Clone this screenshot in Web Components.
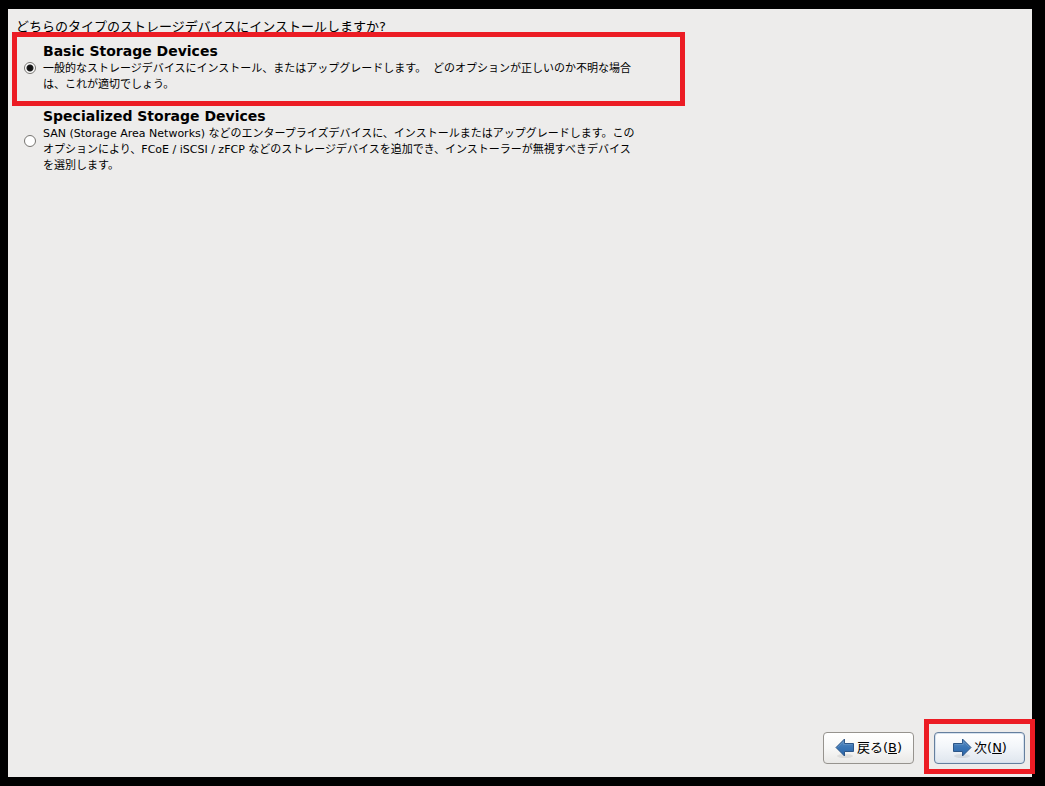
<!DOCTYPE html>
<html lang="ja">
<head>
<meta charset="utf-8">
<meta name="viewport" content="width=device-width, initial-scale=1">
<title>ストレージデバイス</title>
<style>
  body { margin: 0; background: #000; color: #000; font: 13px/16px "DejaVu Sans", "Noto Sans CJK JP", sans-serif; }
</style>
</head>
<body>
<installer-screen>
  <span slot="question">どちらのタイプのストレージデバイスにインストールしますか?</span>
  <storage-option value="basic" checked highlighted>
    <span slot="name">Basic Storage Devices</span>
    一般的なストレージデバイスにインストール、またはアップグレードします。&nbsp; どのオプションが正しいのか不明な場合は、これが適切でしょう。
  </storage-option>
  <storage-option value="specialized">
    <span slot="name">Specialized Storage Devices</span>
    SAN (Storage Area Networks) などのエンタープライズデバイスに、インストールまたはアップグレードします。このオプションにより、FCoE / iSCSI / zFCP などのストレージデバイスを追加でき、インストーラーが無視すべきデバイスを選別します。
  </storage-option>
  <nav-button slot="actions" direction="back" key="b">戻る(<u>B</u>)</nav-button>
  <nav-button slot="actions" direction="next" key="n" highlighted>次(<u>N</u>)</nav-button>
</installer-screen>

<template id="screen-template">
  <style>
    :host { display: flex; box-sizing: border-box; min-height: 100vh; padding: 9px 13px 9px 8px; }
    main { flex: 1; display: flex; flex-direction: column; background: #edeceb; min-width: 0; }
    h1 { height: 23px; box-sizing: border-box; margin: 0; padding: 10px 8px 0; font-size: 13px; font-weight: 400; line-height: 16px; }
    .options { flex: 1; display: flex; flex-direction: column; align-items: flex-start; gap: 1px; padding: 0 4px; }
    footer { display: flex; justify-content: flex-end; align-items: flex-start; gap: 10px; margin-right: -3px; padding-bottom: 3px; }
  </style>
  <main>
    <h1><slot name="question"></slot></h1>
    <div class="options" role="radiogroup"><slot></slot></div>
    <footer><slot name="actions"></slot></footer>
  </main>
</template>

<template id="option-template">
  <style>
    :host { display: block; box-sizing: border-box; width: 100%; max-width: 673px; border: 0 solid transparent; border-width: 0 5px; }
    :host([highlighted]) { border: 5px solid #ec1c24; padding: 5px 0 8px; }
    label { display: flex; align-items: center; gap: 7px; padding: 0 7px; }
    input { appearance: none; flex: none; box-sizing: border-box; width: 12px; height: 12px; margin: 0; border: 1px solid #777571; border-radius: 50%; background: #fff; }
    input:checked { background: radial-gradient(circle at 50% 50%, #111 0 2px, #222 3px, #fff 4px); }
    .text { max-width: 598px; font-size: 11px; line-height: 16px; }
    strong { display: block; font-size: 14px; line-height: 19px; }
  </style>
  <label><input type="radio" name="storage"><span class="text"><strong><slot name="name"></slot></strong><slot></slot></span></label>
</template>

<template id="button-template">
  <style>
    :host { display: block; padding: 13px 0 10px; }
    :host([highlighted]) { border: 5px solid #ec1c24; padding: 8px 5px 5px; }
    button { display: flex; align-items: center; justify-content: center; gap: 2px; box-sizing: border-box; min-width: 91px; height: 32px; margin: 0; padding: 0 9px; border: 1px solid #96938e; border-radius: 4px; background: linear-gradient(#fff, #f8f8f7 50%, #e9e8e6); color: inherit; font: inherit; }
    :host([highlighted]) button { border-color: #657f9e; background: linear-gradient(#fff, #f3f6fa 45%, #dfe6ee); box-shadow: inset 0 0 0 1px #d5e1ee; }
    svg { width: 20px; height: 20px; flex: none; }
    :host([direction="next"]) .arrow { transform: scaleX(-1); transform-origin: 10px 10px; }
  </style>
  <button type="button">
    <svg viewBox="0 0 20 20" aria-hidden="true">
      <defs><linearGradient id="fill" x1="0" y1="0" x2="0" y2="1"><stop offset="0" stop-color="#5b8fc4"/><stop offset=".5" stop-color="#3b75b5"/><stop offset="1" stop-color="#2865a9"/></linearGradient></defs>
      <ellipse cx="10" cy="18" rx="8" ry="2" fill="#000" opacity=".08"/>
      <g class="arrow"><path d="M1 9.5 9.5 1V5.5H18.5V13.5H9.5V18Z" fill="url(#fill)" stroke="#2d5688" stroke-linejoin="round"/><path d="M2.6 9.4 8.6 3.4V6.5H17.5" fill="none" stroke="#6c98c8" stroke-width=".6"/></g>
    </svg>
    <span><slot></slot></span>
  </button>
</template>

<script>
  class TemplateElement extends HTMLElement {
    constructor() {
      super();
      const template = document.getElementById(this.constructor.template);
      this.attachShadow({ mode: "open" }).append(template.content.cloneNode(true));
    }
  }

  class StorageOption extends TemplateElement {
    static template = "option-template";
    static observedAttributes = ["checked"];
    get input() { return this.shadowRoot.querySelector("input"); }
    connectedCallback() {
      this.input.value = this.getAttribute("value");
      this.input.onchange = () => {
        for (const option of this.parentElement.querySelectorAll("storage-option"))
          option.toggleAttribute("checked", option === this);
      };
    }
    attributeChangedCallback() { this.input.checked = this.hasAttribute("checked"); }
  }

  class NavButton extends TemplateElement {
    static template = "button-template";
    connectedCallback() {
      this.shadowRoot.querySelector("button").accessKey = this.getAttribute("key");
    }
  }

  class InstallerScreen extends TemplateElement {
    static template = "screen-template";
  }

  customElements.define("storage-option", StorageOption);
  customElements.define("nav-button", NavButton);
  customElements.define("installer-screen", InstallerScreen);
</script>
</body>
</html>
